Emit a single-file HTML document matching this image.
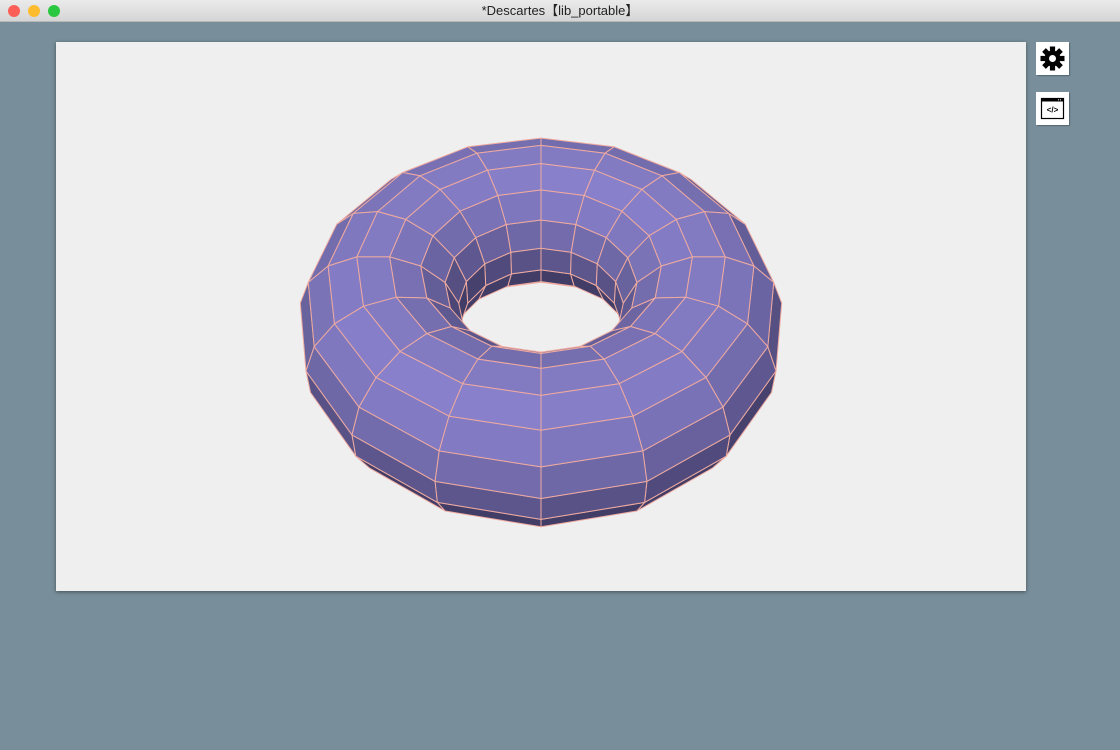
<!DOCTYPE html>
<html><head><meta charset="utf-8"><style>
html,body{margin:0;padding:0;width:1120px;height:750px;overflow:hidden;background:#788f9b;font-family:"Liberation Sans","Noto Sans CJK JP",sans-serif}
#tb{position:absolute;left:0;top:0;width:1120px;height:22px;background:linear-gradient(#ebebeb,#d5d5d5);border-bottom:1px solid #b8b8b8;box-sizing:border-box;text-align:center;font-size:13px;line-height:22px;color:#222}
.d{position:absolute;top:5px;width:12px;height:12px;border-radius:50%}
#panel{position:absolute;left:56px;top:42px;width:970px;height:549px;background:#efefef;box-shadow:0 1px 4px rgba(0,0,0,.45)}
.btn{position:absolute;left:1036px;width:33px;height:33px;background:#fff;box-shadow:1px 1px 1px rgba(0,0,0,.3)}
svg{position:absolute;left:0;top:0}
</style></head><body>
<div id="tb"><span class="d" style="left:8px;background:#fc5f57"></span><span class="d" style="left:28px;background:#fdbc2e"></span><span class="d" style="left:48px;background:#29c840"></span>*Descartes【lib_portable】</div>
<div id="panel"></div>
<svg id="t" width="1120" height="750"></svg>
<div class="btn" style="top:42px"><svg width="33" height="33" viewBox="0 0 33 33"><g transform="translate(16.5,16.5)" fill="#000"><g id="tooth"><rect x="-2.6" y="-12" width="5.2" height="6"/></g><use href="#tooth" transform="rotate(45)"/><use href="#tooth" transform="rotate(90)"/><use href="#tooth" transform="rotate(135)"/><use href="#tooth" transform="rotate(180)"/><use href="#tooth" transform="rotate(225)"/><use href="#tooth" transform="rotate(270)"/><use href="#tooth" transform="rotate(315)"/><circle r="8"/><circle r="3.5" fill="#fff"/></g></svg></div>
<div class="btn" style="top:92px"><svg width="33" height="33" viewBox="0 0 33 33"><rect x="5.5" y="6.5" width="22" height="20" fill="none" stroke="#000" stroke-width="1.2"/><rect x="5.5" y="6.5" width="22" height="3" fill="#000"/><rect x="22" y="7.3" width="1" height="1" fill="#fff"/><rect x="24" y="7.3" width="1" height="1" fill="#fff"/><text x="16.5" y="20.5" font-size="8" text-anchor="middle" font-family="Liberation Sans" font-weight="bold">&lt;/&gt;</text></svg></div>
<script>
var R=160,r=80,cx=541,cy=314,phi=Math.asin(0.7125),sp=Math.sin(phi),cp=Math.cos(phi),N=16,M=16,D=1200;
function P(i,j){var u=i*2*Math.PI/N,v=(j+0.5)*2*Math.PI/M;var w=R+r*Math.cos(v);var X=w*Math.cos(u),Y=w*Math.sin(u),Z=r*Math.sin(v);
var d=Y*cp+Z*sp,s=D/(D-d);
return {x:cx+X*s,y:cy+(Y*sp-Z*cp)*s*0.988,d:d,X:X,Y:Y,Z:Z};}
var L=[-0.15,0.35,0.92];var ll=Math.hypot(L[0],L[1],L[2]);L=L.map(a=>a/ll);
var faces=[];
for(var i=0;i<N;i++)for(var j=0;j<M;j++){
var a=P(i,j),b=P(i+1,j),c=P(i+1,j+1),e=P(i,j+1);
var ux=c.X-a.X,uy=c.Y-a.Y,uz=c.Z-a.Z,vx=e.X-b.X,vy=e.Y-b.Y,vz=e.Z-b.Z;
var n=[uy*vz-uz*vy,uz*vx-ux*vz,ux*vy-uy*vx];
var cxm=(a.X+b.X+c.X+e.X)/4,cym=(a.Y+b.Y+c.Y+e.Y)/4,cz=(a.Z+b.Z+c.Z+e.Z)/4;var rl=Math.hypot(cxm,cym);
var nl=Math.hypot(n[0],n[1],n[2]);n=n.map(q=>q/nl);
var o=[cxm-cxm/rl*R,cym-cym/rl*R,cz];
if(n[0]*o[0]+n[1]*o[1]+n[2]*o[2]<0)n=n.map(q=>-q);
var cam=[0,D*cp,D*sp];var vv=[cam[0]-cxm,cam[1]-cym,cam[2]-cz];
if(n[0]*vv[0]+n[1]*vv[1]+n[2]*vv[2]<0)continue;
var k=Math.max(0,n[0]*L[0]+n[1]*L[1]+n[2]*L[2]);var t=0.05+0.95*k;
var col=[Math.round(62+(136-62)*t),Math.round(57+(128-57)*t),Math.round(98+(202-98)*t)];
faces.push({d:(a.d+b.d+c.d+e.d)/4,p:[a,b,c,e],c:'rgb('+col+')'});}
faces.sort((p,q)=>p.d-q.d);
var s='';faces.forEach(f=>{s+='<polygon points="'+f.p.map(q=>q.x.toFixed(1)+','+q.y.toFixed(1)).join(' ')+'" fill="'+f.c+'" stroke="#eeaaa0" stroke-width="1" stroke-linejoin="round"/>';});
document.getElementById('t').innerHTML=s;
</script>
</body></html>
